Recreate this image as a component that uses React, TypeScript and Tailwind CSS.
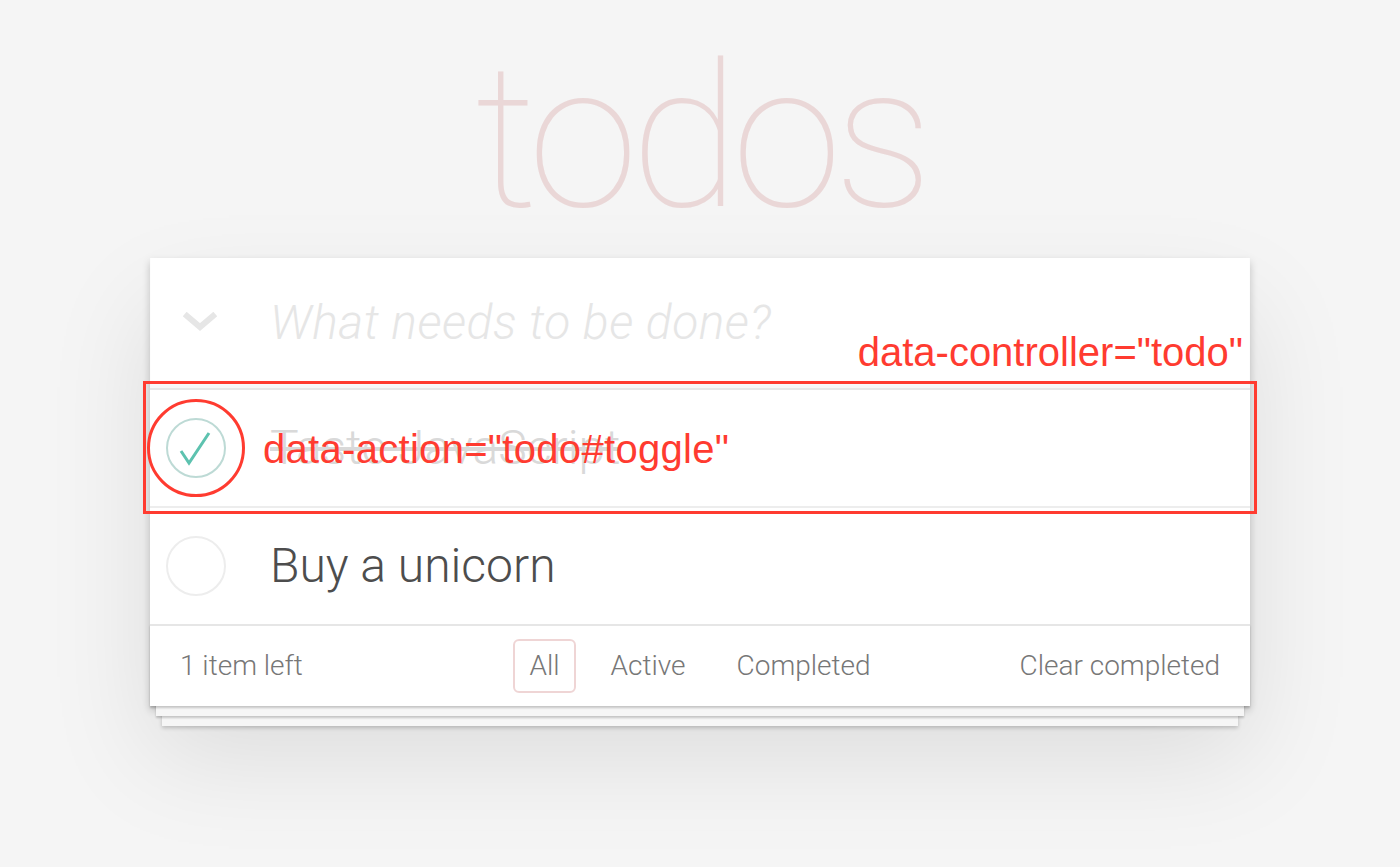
const ui = { fontFamily: '"Helvetica Neue", Roboto, "Liberation Sans", sans-serif' };
const mark = { fontFamily: '"Liberation Sans", Arial, sans-serif' };

const Chevron = () => (
  <svg width="34" height="22" viewBox="0 0 34 22" fill="none">
    <polyline points="4,4 17,15 30,4" stroke="#e6e6e6" strokeWidth="6" strokeLinecap="square" />
  </svg>
);

const Toggle = ({ done }: { done?: boolean }) => (
  <svg width="60" height="60" viewBox="0 0 60 60" fill="none">
    <circle cx="30" cy="30" r="29" stroke={done ? "#bddad5" : "#ededed"} strokeWidth="2" />
    {done && <polyline points="15,33 23,45 43,15" stroke="#5dc2af" strokeWidth="3" />}
  </svg>
);

const App = () => {
  const filters = ["All", "Active", "Completed"];

  return (
    <div className="min-h-screen w-full bg-[#f5f5f5] flex flex-col items-center" style={ui}>
      <div className="h-[258px] w-full flex justify-center">
        <h1 className="pt-[38px] text-[200px] leading-[200px] font-thin tracking-[-8px] text-[#ead7d7]">todos</h1>
      </div>

      <section className="relative w-[1100px] bg-white shadow-[0_4px_8px_rgba(0,0,0,0.2),0_50px_100px_rgba(0,0,0,0.1)]">
        <div className="h-[130px] flex items-center shadow-[inset_0_-4px_2px_rgba(0,0,0,0.03)]">
          <div className="w-[120px] flex justify-center pr-[20px]">
            <Chevron />
          </div>
          <span className="text-[48px] italic font-light tracking-[0.5px] text-[#e6e6e6]">What needs to be done?</span>
        </div>

        <ul className="border-t-2 border-[#e6e6e6]">
          <li className="h-[118px] flex items-center border-b-2 border-[#ededed]">
            <div className="w-[120px] pl-[16px]">
              <Toggle done />
            </div>
            <span className="text-[48px] font-light text-[#d9d9d9] line-through">Taste JavaScript</span>
          </li>
          <li className="h-[116px] flex items-center">
            <div className="w-[120px] pl-[16px]">
              <Toggle />
            </div>
            <span className="text-[48px] font-light text-[#4d4d4d]">Buy a unicorn</span>
          </li>
        </ul>

        <footer className="relative h-[82px] border-t-2 border-[#e6e6e6] bg-white px-[30px] grid grid-cols-[1fr_auto_1fr] items-center text-[28px] font-light text-[#777] shadow-[0_2px_2px_rgba(0,0,0,0.2),0_16px_0_-6px_#f6f6f6,0_18px_2px_-6px_rgba(0,0,0,0.2),0_32px_0_-12px_#f6f6f6,0_34px_4px_-12px_rgba(0,0,0,0.2)]">
          <span>1 item left</span>
          <ul className="flex gap-[19px]">
            {filters.map((f) => (
              <li key={f}>
                <a
                  className={
                    f === "All"
                      ? "block px-[14px] py-[4px] border-2 rounded-[6px] border-[rgba(175,47,47,0.2)]"
                      : "block px-[14px] py-[4px] border-2 rounded-[6px] border-transparent"
                  }
                >
                  {f}
                </a>
              </li>
            ))}
          </ul>
          <span className="justify-self-end">Clear completed</span>
        </footer>

        {/* annotations */}
        <div className="absolute right-[7px] top-[74px] text-[40px] leading-[40px] text-[#ff3b30]" style={mark}>
          data-controller="todo"
        </div>
        <div className="absolute left-[-7px] top-[123px] w-[1114px] h-[133px] border-[3px] border-[#ff3b30]" />
        <div className="absolute left-[-3px] top-[141px] w-[98px] h-[98px] rounded-full border-[3px] border-[#ff3b30]" />
        <div className="absolute left-[113px] top-[171px] text-[40px] leading-[40px] tracking-[0.3px] text-[#ff3b30]" style={mark}>
          data-action="todo#toggle"
        </div>
      </section>
    </div>
  );
};

export default App;
